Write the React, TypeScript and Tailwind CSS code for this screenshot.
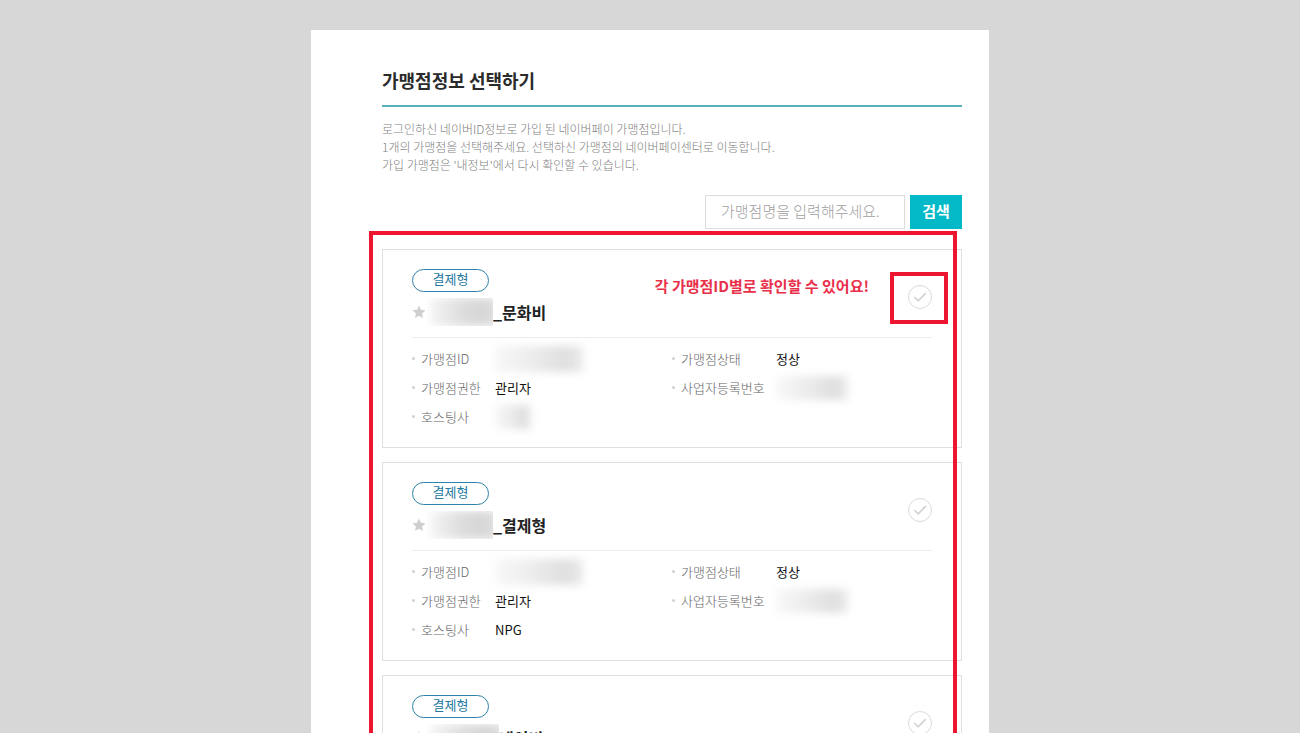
import React from "react";

type Mask = { mask: string };
type Value = string | Mask;

type Merchant = {
  kind: string;
  name: string;
  nameMask: string;
  id: Value;
  role: Value;
  host: Value;
  status: Value;
  bizNo: Value;
};

const ID_MASK = "w-[88px] h-[26px]";
const BIZ_MASK = "w-[72px] h-[24px]";

const merchants: Merchant[] = [
  {
    kind: "결제형",
    name: "_문화비",
    nameMask: "w-[67px]",
    id: { mask: ID_MASK },
    role: "관리자",
    host: { mask: "w-[36px] h-[24px]" },
    status: "정상",
    bizNo: { mask: BIZ_MASK },
  },
  {
    kind: "결제형",
    name: "_결제형",
    nameMask: "w-[67px]",
    id: { mask: ID_MASK },
    role: "관리자",
    host: "NPG",
    status: "정상",
    bizNo: { mask: BIZ_MASK },
  },
  {
    kind: "결제형",
    name: "네이비",
    nameMask: "w-[73px]",
    id: { mask: ID_MASK },
    role: "관리자",
    host: "NPG",
    status: "정상",
    bizNo: { mask: BIZ_MASK },
  },
];

function Star() {
  return (
    <svg viewBox="0 0 14 14" className="size-[14px] shrink-0" fill="#cfcfcf" aria-hidden="true">
      <path d="M7 .6 8.9 4.8 13.5 5.3 10.1 8.4 11 13 7 10.7 3 13 3.9 8.4.5 5.3 5.1 4.8Z" />
    </svg>
  );
}

function CheckButton({ label }: { label: string }) {
  return (
    <button
      type="button"
      aria-label={label}
      className="mt-4 flex size-6 shrink-0 items-center justify-center rounded-full border border-[#dadada] bg-white"
    >
      <svg viewBox="0 0 14 12" className="h-3 w-[14px]" fill="none" stroke="#d2d2d2" strokeWidth="1.7">
        <path d="M1.3 6 5.2 9.8 12.8 2.2" />
      </svg>
    </button>
  );
}

function Field({ label, value, wide }: { label: string; value: Value; wide?: boolean }) {
  return (
    <div className="flex h-[29px] items-center">
      <dt className={`flex shrink-0 items-center gap-[6px] font-light text-[#666] ${wide ? "w-[104px]" : "w-[83px]"}`}>
        <span className="size-[3px] rounded-full bg-[#d0d0d0]" />
        {label}
      </dt>
      <dd className="text-[#111]">
        {typeof value === "string" ? (
          value
        ) : (
          <div
            className={`bg-[linear-gradient(90deg,#f8f8f8,#ededed_40%,#dfdfdf_80%,#ebebeb)] blur-[4px] ${value.mask}`}
          />
        )}
      </dd>
    </div>
  );
}

function MerchantCard({ item }: { item: Merchant }) {
  return (
    <li className="border border-[#dfdfdf] px-[29px] pb-4">
      <div className="flex items-start justify-between border-b border-[#ececec] pt-[19px] pb-[11px]">
        <div>
          <span className="flex h-[23px] w-[77px] items-center justify-center rounded-full border border-[#2e83ac] pb-[3px] text-[13px] text-[#23789f]">
            {item.kind}
          </span>
          <h2 className="mt-[6px] flex h-7 items-center text-base font-bold text-[#222]">
            <Star />
            <span className={`h-full overflow-hidden ${item.nameMask}`}>
              <span className="-mr-1 ml-1 block h-full bg-[linear-gradient(90deg,#f6f6f6,#dedede_45%,#d6d6d6_75%,#dedede)] blur-[4px]" />
            </span>
            <span className="pb-px">{item.name}</span>
          </h2>
        </div>
        <CheckButton label={`${item.name} 선택`} />
      </div>
      <div className="grid grid-cols-2 pt-[6px] text-[13px]">
        <dl>
          <Field label="가맹점ID" value={item.id} />
          <Field label="가맹점권한" value={item.role} />
          <Field label="호스팅사" value={item.host} />
        </dl>
        <dl>
          <Field label="가맹점상태" value={item.status} wide />
          <Field label="사업자등록번호" value={item.bizNo} wide />
        </dl>
      </div>
    </li>
  );
}

export default function App() {
  return (
    <div className="h-screen overflow-hidden bg-[#d7d7d7] pt-[30px] font-['Noto_Sans_CJK_KR','Noto_Sans',sans-serif]">
      <main className="mx-auto min-h-full max-w-[678px] bg-white pt-[35px] pr-[27px] pl-[71px]">
        <h1 className="border-b-2 border-[#57b0b8] pb-[10px] text-lg leading-[30px] font-bold text-[#2b2b2b]">
          가맹점정보 선택하기
        </h1>
        <p className="mt-[13px] text-xs leading-[18px] font-light text-[#808080]">
          로그인하신 네이버ID정보로 가입 된 네이버페이 가맹점입니다.
          <br />
          1개의 가맹점을 선택해주세요. 선택하신 가맹점의 네이버페이센터로 이동합니다.
          <br />
          가입 가맹점은 '내정보'에서 다시 확인할 수 있습니다.
        </p>
        <form className="mt-[21px] flex justify-end gap-[5px]" onSubmit={(e) => e.preventDefault()}>
          <input
            type="text"
            aria-label="가맹점명"
            placeholder="가맹점명을 입력해주세요."
            className="h-[34px] w-[200px] border border-[#dcdcdc] px-[15px] pb-[3px] text-[15px] font-light text-[#333] outline-none placeholder:text-[#a0a0a0]"
          />
          <button type="submit" className="h-[34px] w-[52px] bg-[#04b9c7] pb-[2px] text-[15px] font-bold text-white">
            검색
          </button>
        </form>
        <section className="relative mt-5">
          <ul className="flex flex-col gap-[14px]">
            {merchants.map((item) => (
              <MerchantCard key={item.name} item={item} />
            ))}
          </ul>
          <div className="pointer-events-none absolute -top-[18px] right-[5px] -bottom-5 -left-[13px] border-4 border-[#ee1530]" />
          <div className="pointer-events-none absolute top-[23px] right-[14px] h-[52px] w-[58px] border-4 border-[#ee1530]" />
          <p className="absolute top-[25px] right-[93px] text-[15px] leading-6 font-bold text-[#e8304a]">
            각 가맹점ID별로 확인할 수 있어요!
          </p>
        </section>
      </main>
    </div>
  );
}
